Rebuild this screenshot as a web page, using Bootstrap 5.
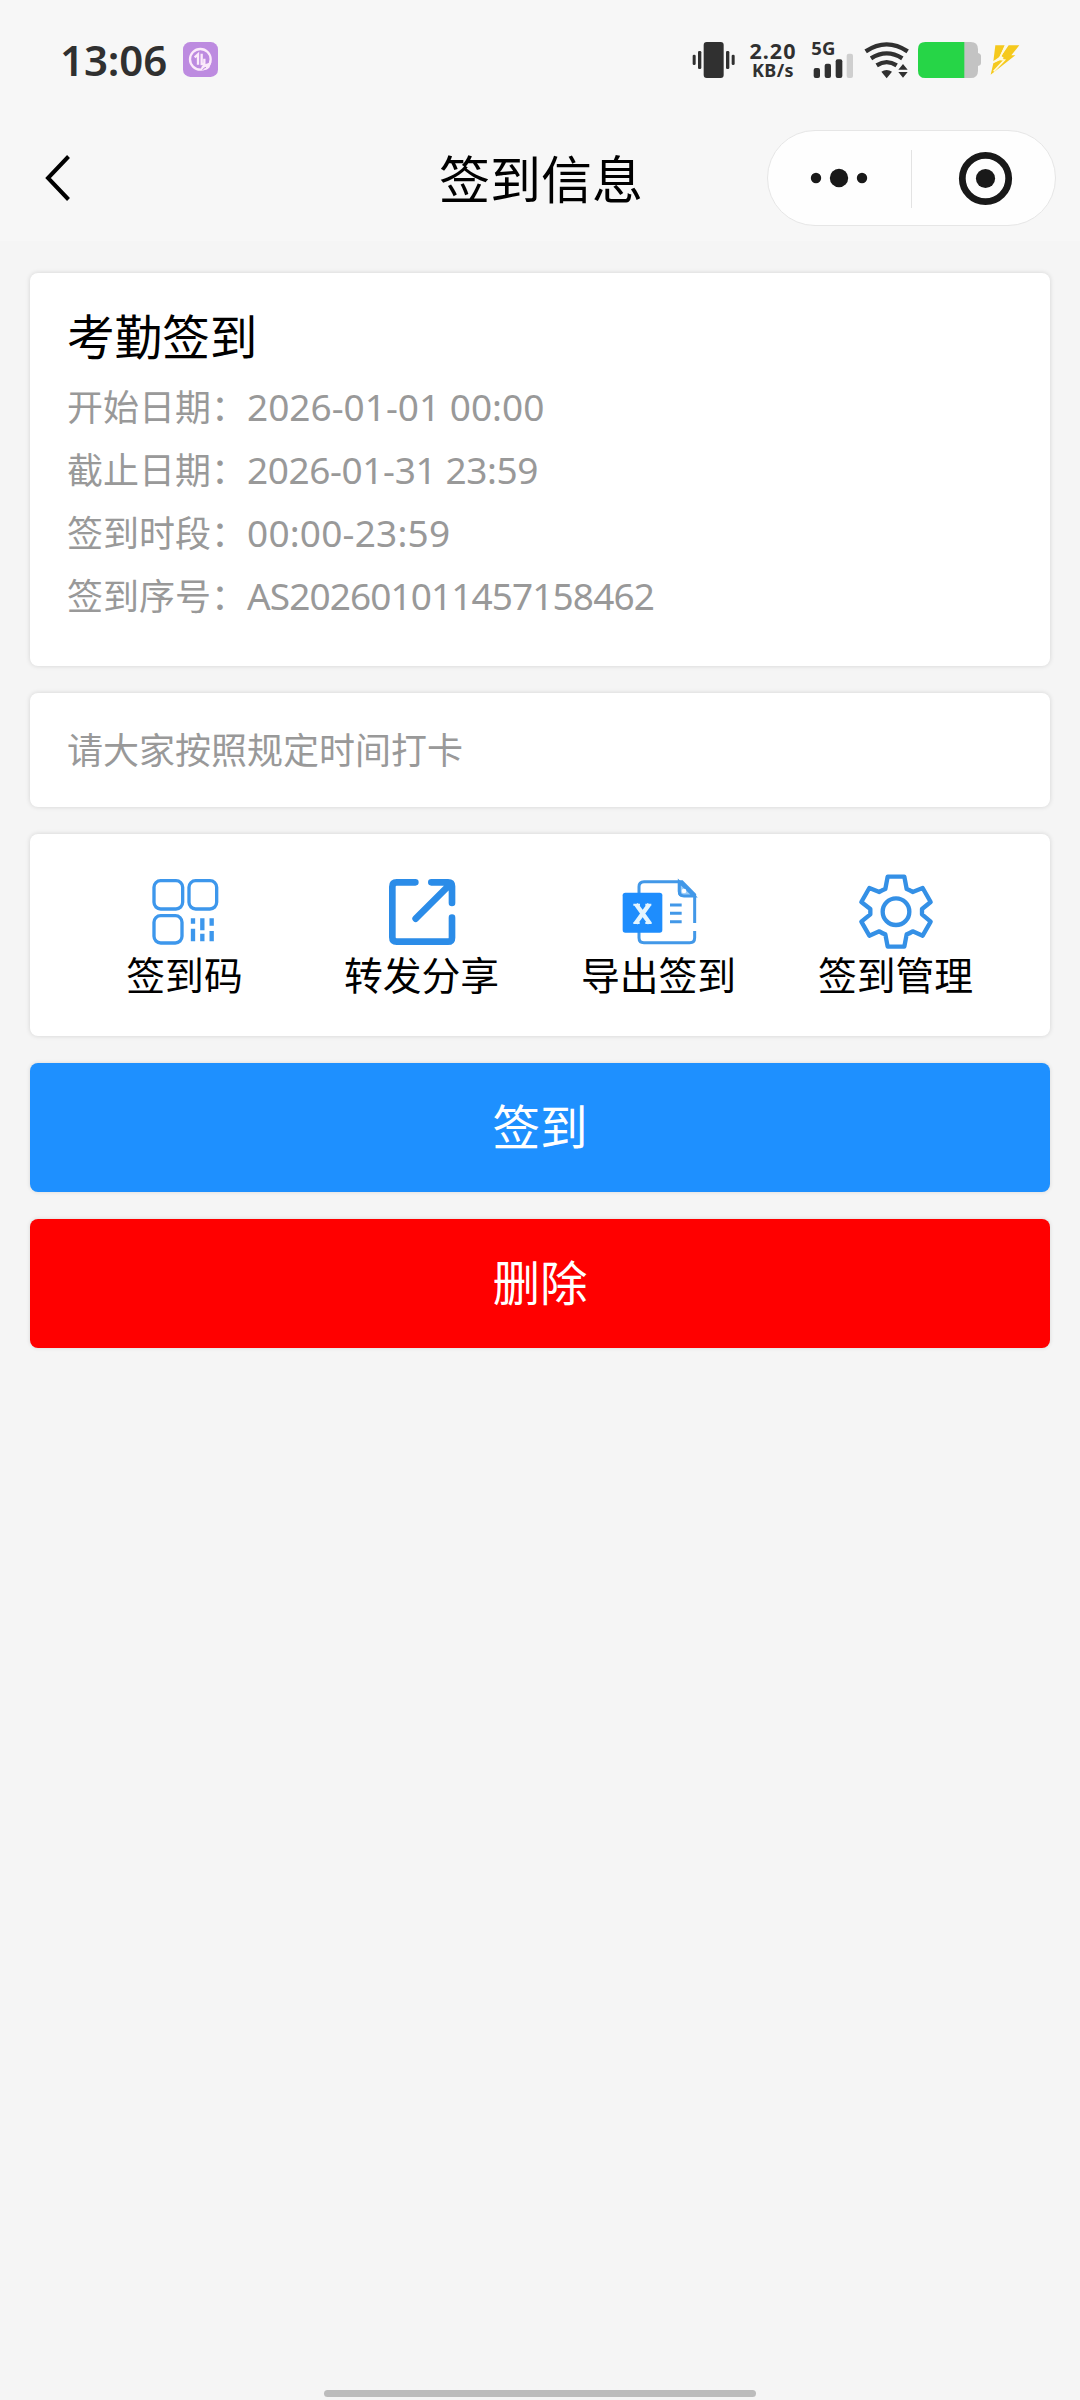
<!DOCTYPE html>
<html lang="zh-CN">
<head>
<meta charset="utf-8">
<meta name="viewport" content="width=device-width, initial-scale=1">
<title>签到信息</title>
<link href="https://cdn.jsdelivr.net/npm/bootstrap@5.3.0/dist/css/bootstrap.min.css" rel="stylesheet">
<style>
  body { background: #f5f5f5; color: #000; font-family: "Noto Sans CJK SC", sans-serif; font-size: 36px; line-height: 1; }
  svg { display: block; flex: none; }
  .screen { height: 2400px; overflow: hidden; }
  .top-area { background: #f7f7f7; height: 241px; }
  .status-row { height: 119px; padding: 0 60px 0 60px; color: #303030; font-family: "Noto Sans", sans-serif; font-weight: 600; }
  .clock { font-size: 42px; letter-spacing: -.1px; }
  .net-speed { width: 50px; margin-right: 13px; text-align: center; white-space: nowrap; }
  .net-num { font-size: 21.5px; line-height: 21px; letter-spacing: 1px; font-weight: 700; }
  .net-unit { font-size: 18px; line-height: 19px; letter-spacing: .4px; font-weight: 700; }
  .title-row { height: 118px; padding: 0 24px 0 45px; }
  .page-title { font-size: 51px; font-weight: 400; line-height: 60px; padding: 0 0 2px 244px; }
  .capsule { width: 289px; height: 96px; background: #fefefe; border: 1px solid #e6e6e6; border-radius: 48px; }
  .content { padding: 32px 30px 0; gap: 27px; }
  .panel { border: 0; border-radius: 8px; box-shadow: 0 0 5px rgba(0,0,0,.14); }
  .info { height: 393px; padding: 32px 37px; }
  .info h2 { font-size: 47.6px; font-weight: 400; line-height: 60px; margin: 0 0 9px; color: #000; }
  .info-line { height: 63px; color: #999; white-space: nowrap; }
  .info-line span { line-height: 50px; }
  .info-line .lab { padding-bottom: 2px; }
  .info-line .val { font-family: "Noto Sans", sans-serif; font-size: 37px; padding-top: 2px; }
  .val-range { letter-spacing: .2px; }
  .val-end { letter-spacing: -.4px; }
  .val-id { letter-spacing: -.9px; }
  .notice { height: 114px; padding: 0 37px 5px; color: #999; }
  .tools { height: 202px; padding: 37px 36px 0; }
  .tool { font-size: 38.8px; }
  .tool-label { line-height: 46px; margin-top: -1px; white-space: nowrap; }
  .action { height: 129px; border: 0; border-radius: 8px; font-size: 47.6px; line-height: 1; color: #fff; box-shadow: 0 0 4px rgba(0,0,0,.12); padding: 0 0 6px; }
  .action-sign, .action-sign:hover { background: #1e90ff; color: #fff; }
  .action-del, .action-del:hover { background: #f00; color: #fff; }
  .home-bar { width: 432px; height: 7px; border-radius: 4px; background: #bcbcbc; margin-bottom: 3px; }
</style>
</head>
<body>
<div class="screen d-flex flex-column">
  <header class="top-area">
    <div class="status-row d-flex align-items-center justify-content-between">
      <div class="d-flex align-items-center">
        <span class="clock">13:06</span>
        <svg class="ms-3" width="35" height="35" viewBox="0 0 105 105">
          <rect width="105" height="105" rx="22" fill="#bd8be0"/>
          <circle cx="52" cy="52" r="31" fill="none" stroke="#fbeafa" stroke-width="7"/>
          <path d="M35 46l10-9v31M56 35v31h8V50" fill="none" stroke="#fbeafa" stroke-width="7"/>
          <path d="M54 80q2-12 14-14l17-5-6 16q-10 10-20 6z" fill="#fbeafa"/>
          <path d="M58 85q3-8 11-9" fill="none" stroke="#bd8be0" stroke-width="3"/>
        </svg>
      </div>
      <div class="d-flex align-items-center">
        <!-- vibrate -->
        <svg width="44" height="40" viewBox="40 60 132 120" fill="#303030" style="margin-right:12px">
          <rect x="75" y="66" width="60" height="108" rx="9"/><rect x="42" y="104" width="9" height="31" rx="4"/><rect x="58" y="93" width="10" height="54" rx="4"/><rect x="142" y="93" width="10" height="54" rx="4"/><rect x="159" y="104" width="9" height="31" rx="4"/>
        </svg>
        <div class="net-speed"><div class="net-num">2.20</div><div class="net-unit">KB/s</div></div>
        <!-- signal -->
        <svg width="44" height="56" viewBox="394 36 132 168" fill="#303030" style="margin-right:9px">
          <text x="395" y="106" font-size="54" font-weight="700" textLength="72" lengthAdjust="spacingAndGlyphs">5G</text>
          <rect x="402" y="144" width="19" height="30" rx="6"/><rect x="435" y="131" width="19" height="43" rx="6"/><rect x="468" y="118" width="20" height="56" rx="6"/><rect x="501" y="101" width="19" height="73" rx="6" fill="#cfcfcf"/>
        </svg>
        <!-- wifi -->
        <svg width="45" height="40" viewBox="552 60 135 120" fill="none" stroke="#303030" stroke-width="13" style="margin-right:9px">
          <path d="M557 94Q620 52 683 94M573 115Q620 85 667 115M590 136Q620 117 650 136"/>
          <path d="M604 155q16-10 32 0l-16 20zM655 149l14-17 14 17zM655 156l14 17 14-17z" fill="#303030" stroke="none"/>
        </svg>
        <!-- battery -->
        <svg width="64" height="40" viewBox="714 60 192 120" style="margin-right:8px">
          <path d="M850 66h22q22 0 22 22v11q9 2 9 10v20q0 7-9 9v14q0 22-22 22h-22z" fill="#c3c3c3"/>
          <path d="M853 66H736q-22 0-22 22v64q0 22 22 22h117z" fill="#26d547"/>
        </svg>
        <!-- charging bolt -->
        <svg width="30" height="40" viewBox="930 60 90 120">
          <path d="M946 76h28l-15 34-19 14z" fill="#f5c91d"/>
          <path d="M986 76h32l-24 30h12l-74 58 8-34 32-16-8-6z" fill="#f5c91d"/>
          <path d="M977 78l-20 40 16 2-32 34M940 126l28-12" fill="none" stroke="#fffadb" stroke-width="5"/>
        </svg>
      </div>
    </div>
    <div class="title-row d-flex align-items-center">
      <svg width="26" height="48" viewBox="0 0 26 48"><path d="M23.500 2.500L3 24l20.500 21.500" fill="none" stroke="#000" stroke-width="4"/></svg>
      <h1 class="page-title flex-fill text-center mb-0">签到信息</h1>
      <svg class="capsule" viewBox="768 131 287 94">
        <g fill="#191919"><circle cx="816" cy="178" r="5.200"/><circle cx="839" cy="178" r="9.200"/><circle cx="862" cy="178" r="5.200"/><circle cx="985.500" cy="178.500" r="9.600"/></g>
        <circle cx="985.500" cy="178.500" r="23.200" fill="none" stroke="#191919" stroke-width="6.800"/>
        <path d="M911.500 150v58" stroke="#e3e3e3"/>
      </svg>
    </div>
  </header>

  <main class="content d-flex flex-column">
    <section class="card panel info">
      <h2>考勤签到</h2>
      <div class="info-line d-flex align-items-center"><span class="lab">开始日期：</span><span class="val">2026-01-01 00:00</span></div>
      <div class="info-line d-flex align-items-center"><span class="lab">截止日期：</span><span class="val val-end">2026-01-31 23:59</span></div>
      <div class="info-line d-flex align-items-center"><span class="lab">签到时段：</span><span class="val val-range">00:00-23:59</span></div>
      <div class="info-line d-flex align-items-center"><span class="lab">签到序号：</span><span class="val val-id">AS202601011457158462</span></div>
    </section>
    <section class="card panel notice justify-content-center"><div>请大家按照规定时间打卡</div></section>
    <section class="card panel tools">
      <div class="row g-0">
        <div class="col tool d-flex flex-column align-items-center">
          <svg width="80" height="80" viewBox="135 61 240 240" fill="none" stroke="#3d97ec" stroke-width="10">
            <rect x="162" y="90" width="86" height="85" rx="20"/><rect x="267" y="90" width="83" height="85" rx="20"/><rect x="162" y="195" width="84" height="82" rx="20"/>
            <path d="M279 203v16M279 234v38M307 203v36M307 249v23M335 203v22M335 241v31" stroke-width="13"/>
          </svg>
          <div class="tool-label">签到码</div>
        </div>
        <div class="col tool d-flex flex-column align-items-center">
          <svg width="80" height="80" viewBox="846 63 240 240" fill="none" stroke="#2b8ce8" stroke-width="20" stroke-linecap="round" stroke-linejoin="round">
            <path d="M946 97H890q-13 0-13 13v152q0 13 13 13h154q12 0 12-12V203M994 97h50q12 0 12 12v50M1050 103L947 206"/>
          </svg>
          <div class="tool-label">转发分享</div>
        </div>
        <div class="col tool d-flex flex-column align-items-center">
          <svg width="80" height="80" viewBox="203 63 240 240" fill="none" stroke="#4298e8" stroke-width="9">
            <path d="M263 130v-20q0-15 15-15h114l38 39v85M263 246v17q0 15 15 15h137q15 0 15-15v-20M384 97v28q0 11 11 11h34"/>
            <path d="M384 96l44 42h-30q-14 0-14-14z" fill="#9ccdf8"/><circle cx="398" cy="123" r="7" fill="#fff" stroke="none"/>
            <path d="M356 165h35M356 190h35M356 215h35"/>
            <rect x="214" y="128" width="119" height="120" rx="8" fill="#1e8dfd" stroke="none"/>
            <path d="M254 163l41 57M294 163l-41 57" stroke="#e3f5ff" stroke-width="13"/>
            <path d="M246 164h20M282 164h18M246 219h19M282 219h19" stroke="#e3f5ff" stroke-width="6"/>
          </svg>
          <div class="tool-label">导出签到</div>
        </div>
        <div class="col tool d-flex flex-column align-items-center">
          <svg width="80" height="80" viewBox="904 64 240 240" fill="none" stroke="#3490e6" stroke-width="13" stroke-linejoin="round">
            <path d="M999 81h50l7 37q9 3 18 9l30-12 24 42-26 21v16l26 22-24 42-30-13q-9 6-18 9l-7 37h-50l-7-37q-9-3-18-9l-30 13-24-42 27-22v-16l-27-21 24-42 30 12q9-6 18-9z"/>
            <circle cx="1024" cy="186" r="40"/>
          </svg>
          <div class="tool-label">签到管理</div>
        </div>
      </div>
    </section>
    <button type="button" class="btn action action-sign w-100">签到</button>
    <button type="button" class="btn action action-del w-100">删除</button>
  </main>
  <div class="home-bar mt-auto mx-auto"></div>
</div>
<script src="https://cdn.jsdelivr.net/npm/bootstrap@5.3.0/dist/js/bootstrap.bundle.min.js"></script>
</body>
</html>
